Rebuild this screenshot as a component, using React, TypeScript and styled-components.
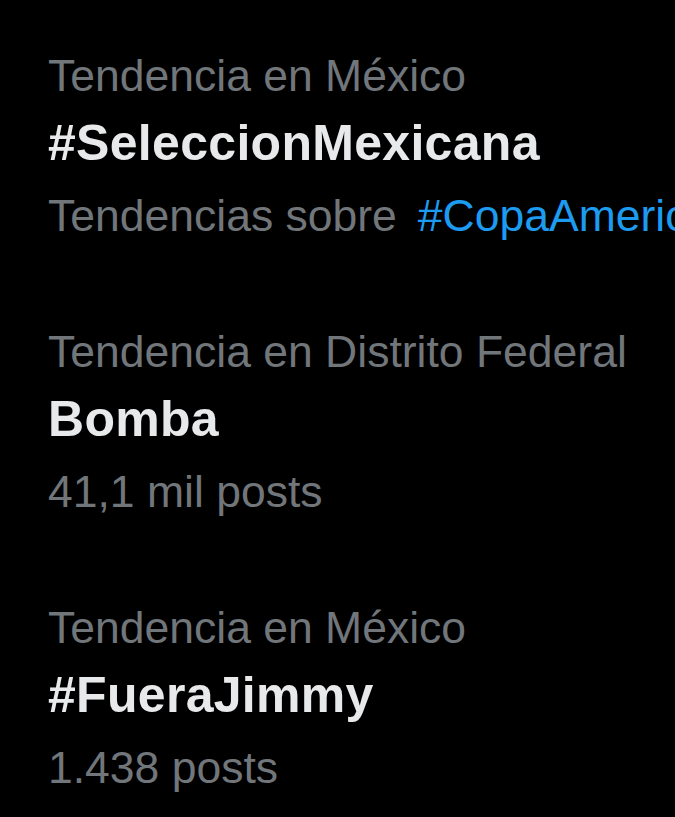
import { FC } from 'react'
import styled, { createGlobalStyle } from 'styled-components'

type Trend = {
  context: string
  name: string
  meta?: string
  related?: string
}

const trends: Trend[] = [
  { context: 'Tendencia en México', name: '#SeleccionMexicana', related: '#CopaAmerica' },
  { context: 'Tendencia en Distrito Federal', name: 'Bomba', meta: '41,1 mil posts' },
  { context: 'Tendencia en México', name: '#FueraJimmy', meta: '1.438 posts' },
]

const GlobalStyle = createGlobalStyle`
  html, body {
    margin: 0;
    padding: 0;
    background: #000;
  }
  body {
    font-family: "Liberation Sans", Arial, sans-serif;
    -webkit-font-smoothing: antialiased;
  }
`

const TrendItem: FC<{ trend: Trend }> = ({ trend }) => (
  <Item>
    <Meta>{trend.context}</Meta>
    <Name>{trend.name}</Name>
    {trend.related ? (
      <Meta>
        Tendencias sobre<Related href="#">{trend.related}</Related>
      </Meta>
    ) : (
      <Meta>{trend.meta}</Meta>
    )}
  </Item>
)

const App: FC = () => (
  <>
    <GlobalStyle />
    <List>
      {trends.map((t, i) => (
        <TrendItem key={i} trend={t} />
      ))}
    </List>
  </>
)

export default App

const List = styled.div`
  display: flex;
  flex-direction: column;
  gap: 66px;
  padding: 41px 0 0 48px;
  width: 675px;
  height: 817px;
  box-sizing: border-box;
  overflow: hidden;
  background: #000;
`

const Item = styled.div`
  display: flex;
  flex-direction: column;
`

const Meta = styled.div`
  font-size: 44.5px;
  line-height: 70px;
  color: #71767b;
  white-space: nowrap;
`

const Name = styled.div`
  font-size: 50px;
  font-weight: bold;
  letter-spacing: 0.3px;
  line-height: 64px;
  margin-bottom: 6px;
  color: #e7e9ea;
  white-space: nowrap;
`

const Related = styled.a`
  margin-left: 21px;
  color: #1d9bf0;
  text-decoration: none;
`
